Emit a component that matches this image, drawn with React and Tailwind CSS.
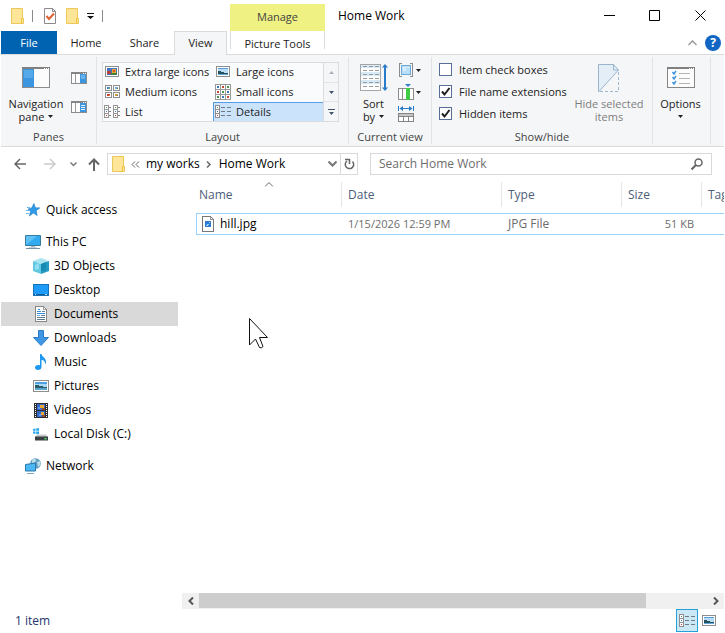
import { useState } from 'react'

function FolderIcon() {
  return (
    <svg width="14" height="16" viewBox="0 0 14 16" className="shrink-0">
      <path d="M.5.5h11v10h1v5H.5z" fill="#ffe598" stroke="#ecc75a" />
      <path d="M10.500 15.500v-5h2" fill="none" stroke="#ecc040" />
    </svg>
  )
}

function Caret({ className = 'fill-[#1e1e1e]' }) {
  return (
    <svg width="5" height="3" viewBox="0 0 5 3" className={`shrink-0 ${className}`}>
      <path d="M0 0h5L2.500 3z" />
    </svg>
  )
}

function NavPaneIcon() {
  return (
    <svg width="28" height="21" viewBox="0 0 28 21" shapeRendering="crispEdges">
      <path d="M.5.5h27v20H.5z" fill="#fcfcfc" stroke="#8c8c8c" />
      <path d="M0 0h28v2H0z" fill="#808080" />
      <path d="M22 1h1v1h-1zM24 1h1v1h-1zM26 1h1v1h-1z" fill="#fff" />
      <path d="M1 2h11v18H1z" fill="#3c95df" />
      <path d="M2 3h9v8H2z" fill="#55a9e9" />
    </svg>
  )
}

function PaneIcon({ details }) {
  return (
    <svg width="16" height="12" viewBox="0 0 16 12" shapeRendering="crispEdges">
      <path d="M.5.5h15v11H.5z" fill="#fcfcfc" stroke="#8c8c8c" />
      <path d="M0 0h16v2H0z" fill="#858585" />
      <path d="M12 1h1v1h-1zM14 1h1v1h-1z" fill="#fff" />
      <path d="M4 2h1v9H4z" fill="#9a9a9a" />
      <path d="M9 2h6v9H9z" fill="#3c95df" />
      {details ? (
        <path d="M10 4.500h4M10 6.500h4M10 8.500h4" stroke="#e3f1fc" />
      ) : (
        <path d="M10 3h4v4h-4z" fill="#65b2ef" />
      )}
    </svg>
  )
}

function PictureIcon({ flower }) {
  return (
    <svg width="14" height="11" viewBox="0 0 14 11" className="shrink-0" shapeRendering="crispEdges">
      <path d="M.5.5h13v10H.5z" fill="#fff" stroke="#8e8e8e" />
      {flower ? (
        <>
          <path d="M2 2h10v7H2z" fill="#4374c4" />
          <path d="M2 5h4v3H2z" fill="#b3443c" />
          <path d="M7 3h4v4H7z" fill="#f0a52c" />
          <path d="M8 4h2v2H8z" fill="#d0532a" />
          <path d="M6 7h6v2H6z" fill="#3f7d3d" />
        </>
      ) : (
        <>
          <path d="M2 2h10v7H2z" fill="#b8dcf5" />
          <path d="M2 2h10v1H2z" fill="#5c9bdc" />
          <path d="M2 5h3v1h3v1h4v1H2z" fill="#26515e" />
          <path d="M2 8h10v1H2z" fill="#63a7d8" />
        </>
      )}
    </svg>
  )
}

function MediumIcon() {
  const cells = [[0, 0, '#4586c8', '#69b04c'], [8, 0, '#7aa8cf', '#487f45'], [0, 7, '#c83c30', '#dc9428'], [8, 7, '#d9a02c', '#3d70bf']]
  return (
    <svg width="15" height="13" viewBox="0 0 15 13" className="shrink-0" shapeRendering="crispEdges">
      {cells.map(([x, y, a, b]) => (
        <g key={`${x}-${y}`} transform={`translate(${x} ${y})`}>
          <path d="M.5.5h6v5h-6z" fill="#fff" stroke="#8e8e8e" />
          <path d="M2 2h3v2H2z" fill={a} />
          <path d="M4 3h1v1H4z" fill={b} />
        </g>
      ))}
    </svg>
  )
}

function SmallIcon() {
  const dots = ['#3b78bd', '#c64a32', '#4a9450', '#c64a32', '#4a9450', '#3b78bd', '#4a9450', '#3b78bd', '#c64a32']
  return (
    <svg width="16" height="16" viewBox="0 0 16 16" className="shrink-0" shapeRendering="crispEdges">
      <path d="M.5.5h15v15H.5zM5.500 0v16M10.500 0v16M0 5.500h16M0 10.500h16" fill="#fff" stroke="#999" />
      {dots.map((color, i) => (
        <rect key={i} x={2 + (i % 3) * 5} y={2 + Math.floor(i / 3) * 5} width="2" height="2" fill={color} />
      ))}
    </svg>
  )
}

function ListIcon() {
  return (
    <svg width="16" height="13" viewBox="0 0 16 13" className="shrink-0" shapeRendering="crispEdges">
      {[0, 9].map((x) => (
        <g key={x} transform={`translate(${x} 0)`}>
          <path d="M.5.5h4v12h-4zM0 4.500h5M0 8.500h5" fill="#fff" stroke="#959595" />
          <path d="M2 2h1v1H2z" fill="#4a9450" />
          <path d="M2 6h1v1H2z" fill="#3b78bd" />
          <path d="M2 10h1v1H2z" fill="#d33" />
          <path d="M5 2h2v1H5zM5 6h2v1H5zM5 10h2v1H5z" fill="#858585" />
        </g>
      ))}
    </svg>
  )
}

function DetailsIcon() {
  return (
    <svg width="16" height="13" viewBox="0 0 16 13" className="shrink-0" shapeRendering="crispEdges">
      <path d="M.5.5h4v12h-4zM0 4.500h5M0 8.500h5" fill="#fff" stroke="#8e8e8e" />
      <path d="M2 2h1v1H2z" fill="#4a9450" />
      <path d="M2 6h1v1H2z" fill="#2c6fd0" />
      <path d="M2 10h1v1H2z" fill="#d33" />
      <path d="M6 2.500h4M12 2.500h4M6 6.500h4M12 6.500h4M6 10.500h4M12 10.500h4" stroke="#707a83" />
    </svg>
  )
}

function SortIcon() {
  return (
    <svg width="28" height="28" viewBox="0 0 28 28">
      <g shapeRendering="crispEdges">
        <path d="M.5.5h20v26H.5z" fill="#fff" stroke="#a6a6a6" />
        <path d="M1 1h19v3H1zM1 8h19v4H1zM1 16h19v4H1z" fill="#d5e9f7" />
        <path
          d="M3 2.500h4M9 2.500h4M15 2.500h4M3 6.500h4M9 6.500h4M15 6.500h4M3 10.500h4M9 10.500h4M15 10.500h4M3 14.500h4M9 14.500h4M15 14.500h4M3 18.500h4M9 18.500h4M15 18.500h4M3 22.500h4M9 22.500h4M15 22.500h4"
          stroke="#9a9a9a"
        />
      </g>
      <path d="M25 2v23" stroke="#2b7cc8" strokeWidth="2" />
      <path d="M22 3.500L25 0l3 3.500zM22 23.500l3 3.500 3-3.500z" fill="#2b7cc8" />
    </svg>
  )
}

function GroupByIcon() {
  return (
    <svg width="16" height="15" viewBox="0 0 16 15" shapeRendering="crispEdges">
      <path d="M4 .5H1.500v13H4M12 .5h2.500v13H12" fill="none" stroke="#8c8c8c" />
      <path d="M3.500 2.500h9v9h-9z" fill="#b9dff8" stroke="#6ba9db" />
      <path d="M5 8h3V5h4V4H5z" fill="#d7eefc" />
    </svg>
  )
}

function AddColumnsIcon() {
  return (
    <svg width="16" height="16" viewBox="0 0 16 16">
      <path d="M7 0h6l-3 3z" fill="#2b7cc8" />
      <g shapeRendering="crispEdges">
        <path d="M.5 4.500h15v11H.5zM4.500 4v12" fill="#fff" stroke="#8c8c8c" />
        <path d="M8 4h4v12H8z" fill="#3fcd48" />
      </g>
    </svg>
  )
}

function SizeColumnsIcon() {
  return (
    <svg width="16" height="16" viewBox="0 0 16 16">
      <path d="M.5 0v5M15.500 0v5M3 2.500h10" stroke="#2b7cc8" />
      <path d="M1.500 2.500L5 0v5zM14.500 2.500L11 0v5z" fill="#2b7cc8" />
      <g shapeRendering="crispEdges">
        <path d="M.5 7.500h15v8H.5z" fill="#fff" stroke="#858585" />
        <path d="M1 8h14v2H1z" fill="#c4c4c4" />
        <path d="M0 10.500h16M5.500 10v6M10.500 10v6" stroke="#858585" />
      </g>
    </svg>
  )
}

function HideSelectedIcon() {
  return (
    <svg width="22" height="29" viewBox="0 0 22 29">
      <path d="M.5.500h15l5 5.500L.5 28z" fill="#e3eef7" />
      <path d="M20.500 6L.5 28V.500h15l5 5.500h-5V.5" fill="none" stroke="#9bb4cd" />
      <path d="M20.500 8v19.500H1" fill="none" stroke="#9fb6cd" strokeDasharray="3 2" />
    </svg>
  )
}

function OptionsIcon() {
  return (
    <svg width="28" height="21" viewBox="0 0 28 21">
      <g shapeRendering="crispEdges">
        <path d="M.5.5h27v20H.5z" fill="#fcfcfc" stroke="#858585" />
        <path d="M0 0h28v2H0z" fill="#808080" />
        <path d="M22 1h1v1h-1zM24 1h1v1h-1zM26 1h1v1h-1z" fill="#fff" />
        <path d="M12 6.500h11M12 11.500h11M12 16.500h11" stroke="#b5b5b5" />
      </g>
      <path d="M5.500 5l1.500 2 2-3M5.500 10l1.500 2 2-3M5.500 15l1.500 2 2-3" fill="none" stroke="#3d94dc" strokeWidth="1.500" />
    </svg>
  )
}

function StarIcon() {
  return (
    <svg width="14" height="14" viewBox="0 0 14 14">
      <path d="M8 .5l1.300 4.200 4.500.2-3.600 2.800 1 4.800-3.800-2.500L3.300 13l1.300-4.700L2 6l3.600-1z" fill="#2f9be8" stroke="#1f7ac4" strokeWidth=".6" />
      <path d="M1 4.500h3M0 7.500h3M0 10.500h3" stroke="#69b8ef" />
    </svg>
  )
}

function MonitorIcon() {
  return (
    <svg width="16" height="15" viewBox="0 0 16 15">
      <path d="M.5.5h15v10H.5z" fill="#5fc1f6" stroke="#377b9f" />
      <path d="M1 10L12 1h3v9z" fill="#32aaf0" />
      <path d="M6 11.500h4" stroke="#a9b6be" />
      <path d="M1 13.500h14" stroke="#7794a6" />
      <path d="M4 12.500h8" stroke="#c8d2d8" />
    </svg>
  )
}

function CubeIcon() {
  return (
    <svg width="16" height="16" viewBox="0 0 16 16">
      <path d="M0 3l8-3 8 3-8 3z" fill="#a9e4f0" />
      <path d="M0 3l8 3v10l-8-3z" fill="#62c8e2" />
      <path d="M16 3L8 6v10l8-3z" fill="#2599c2" />
      <path d="M2 7l4-2v6l-4 1z" fill="#91dff0" />
      <path d="M8 6l5-2v8l-5 1z" fill="#178bb4" />
    </svg>
  )
}

function DesktopIcon() {
  return (
    <svg width="16" height="12" viewBox="0 0 16 12" shapeRendering="crispEdges">
      <path d="M.5.5h15v11H.5z" fill="#1e9bf8" stroke="#1673b8" />
      <path d="M1 10h14v1H1z" fill="#125e9c" />
      <path d="M2 10h1v1H2zM12 10h2v1h-2z" fill="#bfe0fa" />
    </svg>
  )
}

function DocumentIcon() {
  return (
    <svg width="12" height="16" viewBox="0 0 12 16" shapeRendering="crispEdges">
      <path d="M.5.5h8l3 3v12H.5z" fill="#fff" stroke="#868686" />
      <path d="M8.500 1v2.500H11" fill="none" stroke="#a5a5a5" />
      <path d="M3 3.500h2M2 5.500h4M2 7.500h8" stroke="#2f8bdc" />
      <path d="M7 5.500h3M6 9.500h4M2 11.500h8M2 13.500h8" stroke="#5d7c94" />
      <path d="M2 9h3v1H2z" fill="#6cb2ea" />
    </svg>
  )
}

function DownloadIcon() {
  return (
    <svg width="16" height="16" viewBox="0 0 16 16">
      <path d="M5.500.5h5v7h5L8 15.500.5 7.500h5z" fill="#3f97e4" stroke="#2a7cc7" />
    </svg>
  )
}

function MusicIcon() {
  return (
    <svg width="12" height="16" viewBox="0 0 12 16">
      <path d="M5 0h1.500c.3 3 5 4 4.500 8.500-.1.800-.5 1.400-1 2 .5-3-1.500-4.500-3.500-4.700V13c0 1.800-1.500 3-3.500 3S0 15 0 13.500 1.500 11 3 11c.8 0 1.400.1 2 .4z" fill="#1e97ee" />
    </svg>
  )
}

function PicturesIcon() {
  return (
    <svg width="16" height="12" viewBox="0 0 16 12" shapeRendering="crispEdges">
      <path d="M.5.5h15v11H.5z" fill="#fff" stroke="#8e8e8e" />
      <path d="M2 2h12v8H2z" fill="#a9d8f7" />
      <path d="M2 2h12v2H2z" fill="#4ea0e2" />
      <path d="M2 5h4v1h4v1h4v1H2z" fill="#2b5d67" />
      <path d="M2 8h12v2H2z" fill="#5ba6cf" />
    </svg>
  )
}

function VideosIcon() {
  return (
    <svg width="14" height="15" viewBox="0 0 14 15" shapeRendering="crispEdges">
      <path d="M0 0h14v15H0z" fill="#2d2d2d" />
      <path d="M1.500 1v13M12.500 1v13" stroke="#fff" strokeDasharray="1 1" />
      <path d="M3 1h8v6H3zM3 8h8v6H3z" fill="#3567cf" />
      <path d="M6 2h4v3H6zM7 9h3v3H7z" fill="#e8a832" />
      <path d="M4 4h2v2H4zM5 11h2v2H5z" fill="#56a1ef" />
      <path d="M8 5h3v2H8zM8 12h3v2H8z" fill="#8b4a32" />
    </svg>
  )
}

function DiskIcon() {
  return (
    <svg width="16" height="13" viewBox="0 0 16 13">
      <path d="M0 1l2.500-.5v2.300H0zM3.200.4L6 0v2.800H3.200zM0 3.500h2.500v2.300L0 5.400zM3.200 3.500H6v2.800l-2.800-.4z" fill="#25a9ee" />
      <path d="M4 6.500h9L15 9H2z" fill="#c9cccd" />
      <path d="M2 8.500h13v4H2z" fill="#3b4042" />
      <path d="M11.500 10h2v1.500h-2z" fill="#4be36b" />
    </svg>
  )
}

function NetworkIcon() {
  return (
    <svg width="16" height="16" viewBox="0 0 16 16">
      <circle cx="10.500" cy="5.500" r="5.300" fill="#5f9dc0" />
      <path d="M7 2c2-2 5-1 4 1S8 5 7 5zM12 4l3-1c1 3 0 5-2 6z" fill="#b9dcea" />
      <path d="M.5 6.500L10.500 5v8L.5 13z" fill="#4bb7f4" stroke="#2a79ab" />
      <path d="M2 15.500h7" stroke="#7fa6bc" />
    </svg>
  )
}

function FileIcon() {
  return (
    <svg width="12" height="16" viewBox="0 0 12 16" shapeRendering="crispEdges">
      <path d="M.5.5h8l3 3v12H.5z" fill="#fff" stroke="#777" />
      <path d="M8.500 1v2.500H11" fill="none" stroke="#999" />
      <path d="M3 5h6v6H3z" fill="#2b7bd3" />
      <path d="M5 8h2v1H5zM4 9h2v1H4zM7 6h1v1H7z" fill="#9ed0fb" />
    </svg>
  )
}

function RibbonGroup({ label, className = '', children }) {
  return (
    <section className={`mt-[2px] mb-[2px] flex flex-col border-r border-[#e2e3e4] ${className}`}>
      <div className="flex flex-1">{children}</div>
      <div className="h-[14px] text-center leading-[14px] text-[#444]">{label}</div>
    </section>
  )
}

function GalleryItem({ icon, label, active, onClick }) {
  return (
    <button
      onClick={onClick}
      className={`flex h-5 items-center border pb-px text-left whitespace-nowrap ${
        active ? 'border-[#569de5] bg-[#cce4fb]' : 'border-transparent'
      }`}
    >
      <span className="mr-1 flex w-[18px] justify-center">{icon}</span>
      {label}
    </button>
  )
}

function CheckOption({ label, defaultChecked }) {
  return (
    <label className="flex h-[22px] items-center gap-[7px] whitespace-nowrap">
      <span className="grid size-[13px]">
        <input
          type="checkbox"
          defaultChecked={defaultChecked}
          className="peer col-start-1 row-start-1 size-[13px] appearance-none border border-[#5a6d96] bg-white"
        />
        <svg viewBox="0 0 13 13" className="pointer-events-none invisible col-start-1 row-start-1 size-[13px] peer-checked:visible">
          <path d="M3 6.500l2.500 3L10.500 3" fill="none" stroke="#1e1e1e" strokeWidth="2" />
        </svg>
      </span>
      {label}
    </label>
  )
}

const LAYOUTS = [
  { label: 'Extra large icons', icon: <PictureIcon flower /> },
  { label: 'Large icons', icon: <PictureIcon /> },
  { label: 'Medium icons', icon: <MediumIcon /> },
  { label: 'Small icons', icon: <SmallIcon /> },
  { label: 'List', icon: <ListIcon /> },
  { label: 'Details', icon: <DetailsIcon /> },
]

const PLACES = [
  { label: '3D Objects', icon: <CubeIcon /> },
  { label: 'Desktop', icon: <DesktopIcon /> },
  { label: 'Documents', icon: <DocumentIcon /> },
  { label: 'Downloads', icon: <DownloadIcon /> },
  { label: 'Music', icon: <MusicIcon /> },
  { label: 'Pictures', icon: <PicturesIcon /> },
  { label: 'Videos', icon: <VideosIcon /> },
  { label: 'Local Disk (C:)', icon: <DiskIcon /> },
]

function TitleBar() {
  return (
    <div className="flex h-[31px]">
      <div className="flex w-[229px] items-center pl-[10px]">
        <FolderIcon />
        <span className="ml-[7px] h-3 w-px bg-[#8a8a8a]" />
        <button aria-label="Properties" className="ml-[11px]">
          <svg width="12" height="16" viewBox="0 0 12 16">
            <path d="M.5.5h8l3 3v12H.5z" fill="#fff" stroke="#8a8a8a" />
            <path d="M8.500.5v3h3" fill="none" stroke="#8a8a8a" />
            <path d="M2.500 8L5 11l5-5.500" fill="none" stroke="#e0602f" strokeWidth="2" />
          </svg>
        </button>
        <button aria-label="New folder" className="ml-[10px]">
          <FolderIcon />
        </button>
        <button aria-label="Customize toolbar" className="ml-[7px]">
          <svg width="7" height="6" viewBox="0 0 7 6">
            <path d="M0 0h7v1H0zM0 3h7L3.500 6z" fill="#111" />
          </svg>
        </button>
        <span className="ml-2 h-3 w-px bg-[#8a8a8a]" />
      </div>
      <div className="mt-1 flex w-[95px] items-center justify-center bg-[#eff183] text-[11px] text-[#444]">Manage</div>
      <h1 className="flex flex-1 items-center pl-[13px] text-[12px] text-black">Home Work</h1>
      <div className="flex">
        <button aria-label="Minimize" className="flex w-[46px] items-center justify-center">
          <svg width="11" height="11" viewBox="0 0 11 11"><path d="M0 5.500h11" stroke="#000" /></svg>
        </button>
        <button aria-label="Maximize" className="flex w-[45px] items-center justify-center">
          <svg width="11" height="11" viewBox="0 0 11 11"><path d="M.5.5h10v10H.5z" fill="none" stroke="#000" /></svg>
        </button>
        <button aria-label="Close" className="flex w-[47px] items-center justify-center">
          <svg width="11" height="11" viewBox="0 0 11 11"><path d="M.5.5l10 10M10.500.5l-10 10" stroke="#000" /></svg>
        </button>
      </div>
    </div>
  )
}

function RibbonTabs() {
  return (
    <div className="flex h-6 text-[11px] text-[#222]">
      <button className="w-14 border-b border-[#dadbdc] bg-[#0063b1] pt-px text-white">File</button>
      <button className="w-[58px] border-b border-[#dadbdc] pt-px">Home</button>
      <button className="w-[59px] border-b border-[#dadbdc] pt-px">Share</button>
      <button className="w-[53px] border-x border-t border-[#dadbdc] bg-[#f5f6f7]">View</button>
      <span className="w-[3px] border-b border-[#dadbdc]" />
      <div className="flex w-[95px] border-b border-[#dadbdc]">
        <button className="mb-[5px] flex-1 border-x border-[#dadbdc] pt-[5px]">Picture Tools</button>
      </div>
      <div className="flex flex-1 items-center justify-end gap-2 border-b border-[#dadbdc] pr-[3px]">
        <button aria-label="Collapse ribbon">
          <svg width="9" height="6" viewBox="0 0 9 6"><path d="M.5 5l4-4 4 4" fill="none" stroke="#9a9a9a" strokeWidth="1.500" /></svg>
        </button>
        <button aria-label="Help" className="flex size-4 items-center justify-center rounded-full bg-[#1166c4] text-[12px] font-bold text-white">
          ?
        </button>
      </div>
    </div>
  )
}

function Ribbon() {
  const [layout, setLayout] = useState('Details')

  return (
    <div className="flex h-[92px] border-b border-[#dadbdc] bg-[#f5f6f7] text-[11px] leading-[13px] text-[#222]">
      <RibbonGroup label="Panes" className="w-24">
        <button className="flex w-[70px] flex-col items-center pt-[10px]">
          <NavPaneIcon />
          <span className="mt-[9px]">Navigation</span>
          <span className="flex items-center gap-1">pane <Caret /></span>
        </button>
        <div className="flex flex-col gap-[17px] pt-[15px]">
          <button aria-label="Preview pane"><PaneIcon /></button>
          <button aria-label="Details pane"><PaneIcon details /></button>
        </div>
      </RibbonGroup>

      <RibbonGroup label="Layout" className="w-[252px] shrink-0">
        <div className="mt-[5px] ml-[5px] flex h-[60px] w-[237px]">
          <div className="grid flex-1 grid-cols-2 content-start bg-[#fafbfc] outline outline-[#dadbdc] -outline-offset-1">
            {LAYOUTS.map((item) => (
              <GalleryItem key={item.label} {...item} active={item.label === layout} onClick={() => setLayout(item.label)} />
            ))}
          </div>
          <div className="flex w-[15px] flex-col border-y border-r border-[#dadbdc] bg-[#f5f6f7]">
            <button aria-label="Scroll up" className="flex flex-1 items-center justify-center">
              <Caret className="rotate-180 fill-[#aab0ba]" />
            </button>
            <button aria-label="Scroll down" className="flex flex-1 items-center justify-center border-y border-[#e2e3e4]">
              <Caret className="fill-[#44546a]" />
            </button>
            <button aria-label="More layouts" className="flex flex-1 items-center justify-center">
              <svg width="7" height="6" viewBox="0 0 7 6"><path d="M0 0h7v1H0zM1 3h5L3.500 6z" fill="#44546a" /></svg>
            </button>
          </div>
        </div>
      </RibbonGroup>

      <RibbonGroup label="Current view" className="w-[83px] shrink-0">
        <button className="flex w-[49px] flex-col items-center pt-[7px]">
          <SortIcon />
          <span className="mt-[5px]">Sort</span>
          <span className="flex items-center gap-1">by <Caret /></span>
        </button>
        <div className="flex flex-col gap-[6px] pt-[5px]">
          <button aria-label="Group by" className="flex h-4 items-center gap-[2px]"><GroupByIcon /><Caret /></button>
          <button aria-label="Add columns" className="flex h-4 items-center gap-[2px]"><AddColumnsIcon /><Caret /></button>
          <button aria-label="Size all columns to fit" className="h-4"><SizeColumnsIcon /></button>
        </div>
      </RibbonGroup>

      <RibbonGroup label="Show/hide" className="w-[221px] shrink-0">
        <div className="w-[134px] pt-px pl-[7px]">
          <CheckOption label="Item check boxes" />
          <CheckOption label="File name extensions" defaultChecked />
          <CheckOption label="Hidden items" defaultChecked />
        </div>
        <button className="flex flex-1 flex-col items-center pt-[7px] whitespace-nowrap text-[#7d7d7d]">
          <HideSelectedIcon />
          <span className="mt-1">Hide selected</span>
          <span>items</span>
        </button>
      </RibbonGroup>

      <RibbonGroup label="" className="w-[58px] shrink-0">
        <button className="flex w-[55px] flex-col items-center pt-[10px]">
          <OptionsIcon />
          <span className="mt-[9px] mb-[5px]">Options</span>
          <Caret />
        </button>
      </RibbonGroup>
    </div>
  )
}

function AddressBar() {
  return (
    <div className="flex h-[35px] items-start pt-[6px] pr-3 text-[12px] text-black">
      <div className="flex h-[22px] w-[106px] items-center">
        <button aria-label="Back" className="ml-[13px]">
          <svg width="12" height="12" viewBox="0 0 12 12"><path d="M12 6H1M6 1L1 6l5 5" fill="none" stroke="#666" strokeWidth="1.500" /></svg>
        </button>
        <button aria-label="Forward" className="ml-[18px]">
          <svg width="12" height="12" viewBox="0 0 12 12"><path d="M0 6h11M6 1l5 5-5 5" fill="none" stroke="#ccc" strokeWidth="1.500" /></svg>
        </button>
        <button aria-label="Recent locations" className="ml-[14px]">
          <svg width="7" height="5" viewBox="0 0 7 5"><path d="M.5.5l3 3 3-3" fill="none" stroke="#777" strokeWidth="1.500" /></svg>
        </button>
        <button aria-label="Up" className="ml-[11px]">
          <svg width="12" height="13" viewBox="0 0 12 13"><path d="M6 13V1.500M1 6.500l5-5 5 5" fill="none" stroke="#666" strokeWidth="2" /></svg>
        </button>
      </div>
      <nav aria-label="Path" className="flex h-[22px] w-[251px] items-center border border-[#d9d9d9] pl-1">
        <FolderIcon />
        <svg width="9" height="7" viewBox="0 0 9 7" className="ml-[5px]"><path d="M4 .5l-3 3 3 3M8 .5l-3 3 3 3" fill="none" stroke="#666" /></svg>
        <button className="ml-[6px] whitespace-nowrap">my works</button>
        <svg width="5" height="7" viewBox="0 0 5 7" className="ml-[6px]"><path d="M1 .5l3 3-3 3" fill="none" stroke="#666" strokeWidth="1.500" /></svg>
        <button className="ml-2 flex-1 text-left whitespace-nowrap">Home Work</button>
        <button aria-label="Previous locations" className="mr-[3px]">
          <svg width="9" height="6" viewBox="0 0 9 6"><path d="M.5.5l4 4 4-4" fill="none" stroke="#777" strokeWidth="2" /></svg>
        </button>
        <button aria-label="Refresh" className="flex h-full w-[17px] items-center justify-center border-l border-[#d9d9d9]">
          <svg width="11" height="12" viewBox="0 0 11 12">
            <path d="M8.500 3.500A4.200 4.200 0 1 1 3 3" fill="none" stroke="#666" strokeWidth="1.500" />
            <path d="M1 1.500h4.500V6" fill="none" stroke="#666" strokeWidth="1.500" />
          </svg>
        </button>
      </nav>
      <div className="ml-3 flex h-[22px] min-w-0 flex-1 items-center border border-[#d9d9d9] pr-2 pl-2">
        <input
          type="text"
          aria-label="Search Home Work"
          placeholder="Search Home Work"
          className="min-w-0 flex-1 outline-none placeholder:text-[#6d6d6d]"
        />
        <svg width="12" height="12" viewBox="0 0 12 12">
          <circle cx="7.500" cy="4.500" r="3.500" fill="none" stroke="#666" strokeWidth="1.500" />
          <path d="M5 7L.5 11.500" stroke="#666" strokeWidth="2" />
        </svg>
      </div>
    </div>
  )
}

function TreeItem({ icon, label, active, nested }) {
  return (
    <a
      href="#"
      className={`flex h-6 items-center whitespace-nowrap ${nested ? 'pl-8' : 'pl-6'} ${active ? 'bg-[#d9d9d9]' : ''}`}
    >
      <span className="mr-[5px] flex w-4 justify-center">{icon}</span>
      {label}
    </a>
  )
}

function Sidebar() {
  return (
    <nav aria-label="Folders" className="flex w-[177px] shrink-0 flex-col gap-2 pt-4 text-[12px] text-black">
      <TreeItem icon={<StarIcon />} label="Quick access" />
      <div>
        <TreeItem icon={<MonitorIcon />} label="This PC" />
        {PLACES.map((place) => (
          <TreeItem key={place.label} {...place} nested active={place.label === 'Documents'} />
        ))}
      </div>
      <TreeItem icon={<NetworkIcon />} label="Network" />
    </nav>
  )
}

function HeaderCell({ label, sorted }) {
  return (
    <th className="p-0 pb-[6px] text-left font-normal">
      <div className={`relative flex h-[25px] items-center border-r border-[#e5e5e5] ${sorted ? 'pl-[3px]' : 'pl-[6px]'}`}>
        {label}
        {sorted && (
          <svg width="9" height="5" viewBox="0 0 9 5" className="absolute top-0 left-1/2 -translate-x-1/2">
            <path d="M.5 4.500l4-4 4 4" fill="none" stroke="#666" />
          </svg>
        )}
      </div>
    </th>
  )
}

function FileList() {
  return (
    <div className="flex-1 overflow-hidden pl-[14px]">
      <table className="w-full min-w-[606px] table-fixed border-separate border-spacing-0 text-[12px]">
        <colgroup>
          <col className="w-[146px]" />
          <col className="w-[160px]" />
          <col className="w-[120px]" />
          <col className="w-[80px]" />
          <col />
        </colgroup>
        <thead className="text-[#4c607a]">
          <tr>
            <HeaderCell label="Name" sorted />
            <HeaderCell label="Date" />
            <HeaderCell label="Type" />
            <HeaderCell label="Size" />
            <HeaderCell label="Tags" />
          </tr>
        </thead>
        <tbody className="text-[#6d6d6d]">
          <tr className="h-[22px] whitespace-nowrap">
            <td className="border-y border-l border-[#99d1ff] p-0 pl-[5px] text-black">
              <div className="flex items-center gap-[6px]"><FileIcon />hill.jpg</div>
            </td>
            <td className="border-y border-[#99d1ff] p-0 pl-[6px] text-[11px]">1/15/2026 12:59 PM</td>
            <td className="border-y border-[#99d1ff] p-0 pl-[6px]">JPG File</td>
            <td className="border-y border-[#99d1ff] p-0 pr-2 text-right text-[11px]">51 KB</td>
            <td className="border-y border-r border-[#99d1ff] p-0" />
          </tr>
        </tbody>
      </table>
    </div>
  )
}

function ScrollBar() {
  return (
    <div className="flex h-4 bg-[#f0f0f0]">
      <button aria-label="Scroll left" className="flex w-[17px] items-center justify-center">
        <svg width="6" height="8" viewBox="0 0 6 8"><path d="M5 .5L1.500 4 5 7.500" fill="none" stroke="#555" strokeWidth="2" /></svg>
      </button>
      <div className="flex-1"><div className="h-[15px] w-[88%] bg-[#cdcdcd]" /></div>
      <button aria-label="Scroll right" className="flex w-[17px] items-center justify-center">
        <svg width="6" height="8" viewBox="0 0 6 8"><path d="M1 .5L4.500 4 1 7.500" fill="none" stroke="#555" strokeWidth="2" /></svg>
      </button>
    </div>
  )
}

function Pointer() {
  return (
    <svg width="20" height="31" viewBox="0 0 20 31" className="pointer-events-none absolute top-[136px] left-[67px]">
      <path d="M.5.500v26.500l6-6 4 8.500q2 1 3.500-1L10.500 19.500h8z" fill="#fff" stroke="#111" />
    </svg>
  )
}

export default function App() {
  return (
    <div className="flex min-h-screen flex-col overflow-hidden bg-white px-px font-['Open_Sans','Noto_Sans',sans-serif]">
      <TitleBar />
      <RibbonTabs />
      <Ribbon />
      <AddressBar />
      <div className="flex flex-1">
        <Sidebar />
        <main className="relative ml-1 flex min-w-0 flex-1 flex-col">
          <FileList />
          <ScrollBar />
          <Pointer />
        </main>
      </div>
      <footer className="flex h-6 items-start pr-1 pl-[14px] text-[12px] text-[#26356b]">
        <span className="flex-1 leading-6">1 item</span>
        <button aria-label="Details view" className="flex h-[23px] w-[22px] items-center justify-center border border-[#26a0da] bg-[#cbe8f6]">
          <DetailsIcon />
        </button>
        <button aria-label="Thumbnail view" className="flex size-[22px] items-center justify-center">
          <PictureIcon />
        </button>
      </footer>
    </div>
  )
}
